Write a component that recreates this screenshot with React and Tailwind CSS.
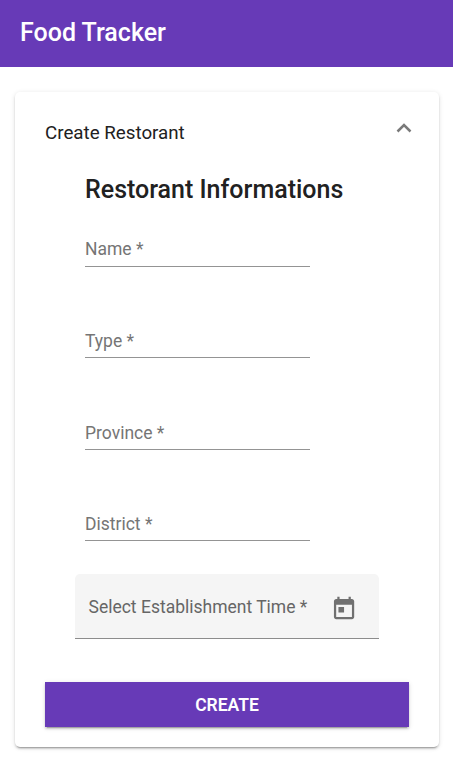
import React from 'react';

function Field({ label, className }) {
  return (
    <div className={`ml-[40px] w-[225px] border-b border-[#949494] text-[17.5px] leading-[26px] text-[#757575] whitespace-nowrap ${className}`}>
      {label}
    </div>
  );
}

export default function App() {
  return (
    <div className="h-[768px] w-[453px] overflow-hidden bg-white font-['Roboto',sans-serif]">
      <header className="flex h-[67px] items-center bg-[#673ab7] pb-[1px] pl-[20px] text-[25px] font-medium text-white">Food Tracker</header>
      <main className="mt-[25px] ml-[15px] h-[655px] w-[424px] rounded-[5px] bg-white px-[30px] shadow-[0_3px_1px_-2px_rgba(0,0,0,0.2),0_2px_2px_0_rgba(0,0,0,0.14),0_1px_5px_0_rgba(0,0,0,0.12)]">
        <div className="flex h-[80px] items-center justify-between text-[18.75px] text-[#212121]">
          <span className="pt-[2px]">Create Restorant</span>
          <svg width="16" height="10" viewBox="0 0 16 10" className="mr-[-3px] mb-[8px]" fill="none" stroke="#7a7a7a" strokeWidth="2.5"><path d="M1.5 8.5 8 2l6.5 6.5" /></svg>
        </div>
        <h1 className="ml-[40px] h-[35px] text-[25px] leading-[35px] font-medium whitespace-nowrap text-[#212121]">Restorant Informations</h1>
        <Field label="Name *" className="mt-[29px] h-[31px]" />
        <Field label="Type *" className="mt-[61px] h-[30px]" />
        <Field label="Province *" className="mt-[62px] h-[30px]" />
        <Field label="District *" className="mt-[61px] h-[30px]" />
        <div className="mt-[33px] ml-[30px] flex h-[65px] w-[304px] items-center justify-between rounded-t-[5px] border-b border-[#8c8c8c] bg-[#f5f5f5] pr-[22px] pl-[13.5px] text-[17.5px] text-[#666]">
          <span className="pt-[2px]">Select Establishment Time *</span>
          <svg className="mt-[5px]" width="27" height="27" viewBox="-0.5 -0.6 24 24" fill="#707070"><path d="M19 3h-1V1h-2v2H8V1H6v2H5c-1.11 0-1.99.9-1.99 2L3 19c0 1.1.89 2 2 2h14c1.1 0 2-.9 2-2V5c0-1.1-.9-2-2-2zm0 16H5V8h14v11zM7 10h5v5H7z" /></svg>
        </div>
        <button className="mt-[43px] h-[45px] w-[364px] bg-[#673ab7] pt-[2px] text-[17.5px] font-semibold text-white shadow-[0_3px_1px_-2px_rgba(0,0,0,0.2),0_2px_2px_0_rgba(0,0,0,0.14),0_1px_5px_0_rgba(0,0,0,0.12)]">CREATE</button>
      </main>
    </div>
  );
}
